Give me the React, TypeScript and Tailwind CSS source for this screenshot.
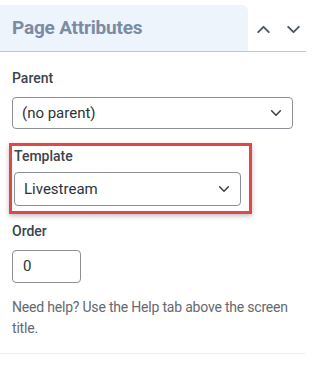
import React from "react";

function Chevron({ up = false, className = "" }: { up?: boolean; className?: string }) {
  return (
    <svg
      viewBox="0 0 16 16"
      className={className}
      fill="none"
      stroke="currentColor"
      strokeWidth={1.8}
      strokeLinecap="round"
      strokeLinejoin="round"
    >
      {up ? <path d="M3 10.5 8 5.5l5 5" /> : <path d="M3 5.5 8 10.5l5-5" />}
    </svg>
  );
}

function SelectBox({ value, className = "" }: { value: string; className?: string }) {
  return (
    <div
      className={`flex items-center justify-between rounded-[4px] border border-[#8c8f94] bg-white pl-[9px] pr-[9px] text-[15px] text-[#2c3338] ${className}`}
    >
      <span>{value}</span>
      <Chevron className="h-[14px] w-[14px] text-[#3c434a]" />
    </div>
  );
}

export default function App() {
  return (
    <div
      className="min-h-[365px] w-[331px] bg-white pt-[5px]"
      style={{ fontFamily: "Roboto, 'Noto Sans', sans-serif" }}
    >
      <div className="w-[306px]">
        {/* header */}
        <div className="flex h-[47px] items-stretch border-b border-[#c3c4c7]">
          <div className="flex w-[248px] items-center rounded-tr-[6px] bg-[#eef4fb] pl-[12px]">
            <h2 className="text-[19px] font-bold tracking-[-0.2px] text-[#7a8ba3]">Page Attributes</h2>
          </div>
          <div className="flex items-center gap-[13px] pl-[7px] pt-[2px] text-[#50575e]">
            <Chevron up className="h-[17px] w-[17px]" />
            <Chevron className="h-[17px] w-[17px]" />
          </div>
        </div>

        {/* body */}
        <div className="border-b border-[#f0f0f1] pb-[14px] pl-[12px] pr-[13px]">
          <div className="pt-[16px] text-[14px] font-medium leading-[20px] text-[#3c434a]">Parent</div>
          <SelectBox value="(no parent)" className="mt-[9px] h-[32px] w-[281px]" />

          <div className="-ml-[3px] mt-[14px] w-[243px] border-[3px] border-[#e0474a] pb-[5px] pl-[2px] pr-[8px] shadow-[0_2px_5px_rgba(0,0,0,0.25)]">
            <div className="text-[14px] font-medium leading-[20px] text-[#3c434a]">Template</div>
            <SelectBox value="Livestream" className="mt-[6px] h-[34px] w-full" />
          </div>

          <div className="mt-[7px] text-[14px] font-medium leading-[20px] text-[#3c434a]">Order</div>
          <div className="mt-[9px] flex h-[33px] w-[69px] items-center rounded-[4px] border border-[#8c8f94] pl-[10px] text-[15px] text-[#2c3338]">
            0
          </div>

          <p className="mt-[14px] text-[14px] leading-[21px] tracking-[-0.2px] text-[#646970]">
            Need help? Use the Help tab above the screen title.
          </p>
        </div>
      </div>
    </div>
  );
}
